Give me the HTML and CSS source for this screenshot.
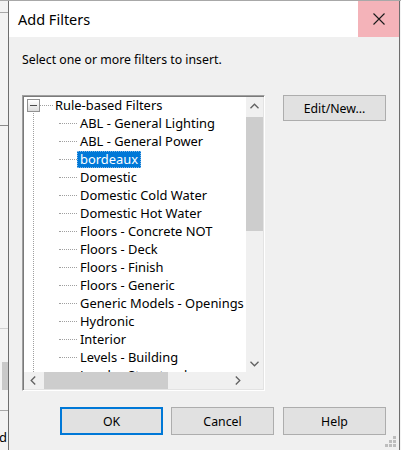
FILE: index.html
```html
<!DOCTYPE html>
<html>
<head>
<meta charset="utf-8">
<link rel="stylesheet" href="styles.css">
</head>
<body>
<span class="behind-letter">d</span>
<div class="dialog">
  <div class="titlebar">
    <span class="title">Add Filters</span>
    <div class="close">
      <svg width="12" height="12" viewBox="0 0 12 12"><path d="M0.5 0.5 L11.5 11.5 M11.5 0.5 L0.5 11.5" stroke="#1a1a1a" stroke-width="1.1" fill="none"/></svg>
    </div>
  </div>
  <div class="body">
    <p class="instr">Select one or more filters to insert.</p>
    <div class="content">
      <div class="treebox">
        <div class="tree">
          <div class="rows">
            <div class="row root">
              <span class="expander"><span class="minus"></span></span>
              <span class="conn-root"></span>
              <span class="label">Rule-based Filters</span>
            </div>
            <div class="children">
              <div class="row child"><span class="conn"></span><span class="label">ABL - General Lighting</span></div>
              <div class="row child"><span class="conn"></span><span class="label">ABL - General Power</span></div>
              <div class="row child"><span class="conn"></span><span class="label selected">bordeaux</span></div>
              <div class="row child"><span class="conn"></span><span class="label">Domestic</span></div>
              <div class="row child"><span class="conn"></span><span class="label">Domestic Cold Water</span></div>
              <div class="row child"><span class="conn"></span><span class="label">Domestic Hot Water</span></div>
              <div class="row child"><span class="conn"></span><span class="label">Floors - Concrete NOT</span></div>
              <div class="row child"><span class="conn"></span><span class="label">Floors - Deck</span></div>
              <div class="row child"><span class="conn"></span><span class="label">Floors - Finish</span></div>
              <div class="row child"><span class="conn"></span><span class="label">Floors - Generic</span></div>
              <div class="row child"><span class="conn"></span><span class="label">Generic Models - Openings</span></div>
              <div class="row child"><span class="conn"></span><span class="label">Hydronic</span></div>
              <div class="row child"><span class="conn"></span><span class="label">Interior</span></div>
              <div class="row child"><span class="conn"></span><span class="label">Levels - Building</span></div>
              <div class="row child"><span class="conn"></span><span class="label">Levels - Structural</span></div>
            </div>
          </div>
          <div class="vscroll">
            <span class="arrow"><svg width="9" height="6" viewBox="0 0 9 6"><path d="M0.5 5.2 L4.5 1.2 L8.5 5.2" stroke="#606060" stroke-width="1.3" fill="none"/></svg></span>
            <span class="vthumb"></span>
            <span class="arrow bottom"><svg width="9" height="6" viewBox="0 0 9 6"><path d="M0.5 0.8 L4.5 4.8 L8.5 0.8" stroke="#606060" stroke-width="1.3" fill="none"/></svg></span>
          </div>
          <div class="hscroll">
            <span class="harrow"><svg width="6" height="9" viewBox="0 0 6 9"><path d="M5.2 0.5 L1.2 4.5 L5.2 8.5" stroke="#606060" stroke-width="1.3" fill="none"/></svg></span>
            <span class="hthumb"></span>
            <span class="harrow right"><svg width="6" height="9" viewBox="0 0 6 9"><path d="M0.8 0.5 L4.8 4.5 L0.8 8.5" stroke="#606060" stroke-width="1.3" fill="none"/></svg></span>
          </div>
          <div class="corner"></div>
        </div>
      </div>
      <div class="side">
        <button class="btn">Edit/New...</button>
      </div>
    </div>
    <div class="actions">
      <button class="btn default">OK</button>
      <button class="btn">Cancel</button>
      <button class="btn help">Help</button>
    </div>
  </div>
  <svg class="grip" width="12" height="12" viewBox="0 0 12 12">
    <g fill="#bdbdbd">
      <rect x="8" y="0" width="3" height="3"/>
      <rect x="4" y="4" width="3" height="3"/><rect x="8" y="4" width="3" height="3"/>
      <rect x="0" y="8" width="3" height="3"/><rect x="4" y="8" width="3" height="3"/><rect x="8" y="8" width="3" height="3"/>
    </g>
  </svg>
</div>
</body>
</html>
```
FILE: styles.css
```css
html, body {
  margin: 0;
  padding: 0;
}
body {
  width: 401px;
  height: 450px;
  overflow: hidden;
  font-family: "Noto Sans", "Open Sans", sans-serif;
  color: #000;
  background-color: #f3f3f3;
  background-image:
    linear-gradient(#c9c9c9, #c9c9c9),
    linear-gradient(#a8a8a8, #a8a8a8),
    linear-gradient(#8a8a8a, #8a8a8a),
    linear-gradient(#d0d0d0, #d0d0d0),
    linear-gradient(#a8a8a8, #a8a8a8),
    linear-gradient(#a8a8a8, #a8a8a8);
  background-size: 6px 28px, 8px 1px, 8px 1px, 8px 1px, 8px 1px, 401px 1px;
  background-position: 2px 362px, 0 12px, 0 125px, 0 328px, 0 410px, 0 0;
  background-repeat: no-repeat;
  position: relative;
}
.behind-letter {
  position: absolute;
  left: -1px;
  top: 428px;
  font-size: 13px;
  font-family: "Noto Sans", sans-serif;
  color: #000;
}
.dialog {
  position: relative;
  margin-left: 8px;
  margin-top: 1px;
  width: 392px;
  height: 449px;
  box-sizing: border-box;
  border-left: 1px solid #6e6e6e;
  border-right: 1px solid #6e6e6e;
  background: #f0f0f0;
}
.titlebar {
  height: 36px;
  background: #fff;
  display: flex;
  align-items: center;
  justify-content: space-between;
}
.title {
  padding-left: 9px;
  font-size: 14.5px;
  color: #000;
  padding-bottom: 1px;
}
.close {
  width: 41px;
  height: 36px;
  background: #f4b3b9;
  display: flex;
  align-items: center;
  justify-content: center;
}
.body {
  padding: 15px 0 0 13px;
}
.instr {
  margin: 0;
  padding-left: 0;
  font-size: 12.3px;
  line-height: 16px;
  height: 16px;
}
.content {
  margin-top: 27px;
  display: flex;
  align-items: flex-start;
}
.treebox {
  width: 243px;
  height: 296px;
  box-sizing: border-box;
  border-top: 1px solid #a0a0a0;
  border-left: 1px solid #a0a0a0;
  border-right: 1px solid #fff;
  border-bottom: 1px solid #fff;
  box-shadow: inset 1px 1px 0 #7a7a7a, inset -1px -1px 0 #e3e3e3;
  padding: 1px;
}
.tree {
  width: 100%;
  height: 100%;
  display: grid;
  grid-template-columns: 1fr 17px;
  grid-template-rows: 1fr 17px;
  background: #fff;
}
.rows {
  overflow: hidden;
  font-size: 12.9px;
  margin-top: -1px;
}
.row {
  height: 18px;
  display: flex;
  align-items: center;
  white-space: nowrap;
}
.root {
  padding-left: 3px;
}
.expander {
  width: 11px;
  height: 11px;
  border: 1px solid #919191;
  background: linear-gradient(#ffffff, #dcdcdc);
  display: flex;
  align-items: center;
  justify-content: center;
  flex: none;
}
.minus {
  width: 7px;
  height: 1px;
  background: #4a4a4a;
}
.conn-root {
  width: 13px;
  border-top: 1px dotted #a0a0a0;
  flex: none;
}
.label {
  padding: 0 3px;
  line-height: 17px;
  height: 17px;
  margin-left: 0;
}
.root .label {
  margin-left: -1px;
}
.children {
  margin-left: 9px;
  margin-top: -3px;
  padding-top: 3px;
  border-left: 1px dotted #a0a0a0;
}
.child {
  padding-left: 25px;
}
.conn {
  width: 18px;
  border-top: 1px dotted #a0a0a0;
  flex: none;
}
.selected {
  background: #0078d7;
  color: #fff;
  outline: 1px dotted #7fb6e6;
  outline-offset: -1px;
}
.vscroll {
  background: #f0f0f0;
  display: flex;
  flex-direction: column;
  align-items: center;
}
.arrow {
  height: 17px;
  width: 17px;
  display: flex;
  align-items: center;
  justify-content: center;
  flex: none;
}
.arrow.bottom {
  margin-top: auto;
}
.vthumb {
  margin-top: 3px;
  width: 17px;
  height: 114px;
  background: #cdcdcd;
}
.hscroll {
  background: #f0f0f0;
  display: flex;
  align-items: center;
}
.harrow {
  width: 17px;
  height: 17px;
  display: flex;
  align-items: center;
  justify-content: center;
  flex: none;
}
.harrow.right {
  margin-left: auto;
}
.hthumb {
  margin-left: 3px;
  width: 124px;
  height: 17px;
  background: #cdcdcd;
}
.corner {
  background: #f0f0f0;
}
.side {
  margin-left: 18px;
}
.btn {
  font-family: "Noto Sans", "Open Sans", sans-serif;
  font-size: 12.3px;
  color: #000;
  width: 103px;
  height: 26px;
  background: #e1e1e1;
  border: 1px solid #adadad;
  padding: 0;
  margin: 0;
  box-sizing: border-box;
  display: block;
}
.actions {
  margin-top: 16px;
  margin-left: 38px;
  display: flex;
  gap: 8px;
}
.actions .btn {
  height: 28px;
}
.btn.default {
  border: 2px solid #0078d7;
}
.btn.help {
  margin-left: 1px;
}
.grip {
  position: absolute;
  right: 2px;
  bottom: 2px;
}
```
